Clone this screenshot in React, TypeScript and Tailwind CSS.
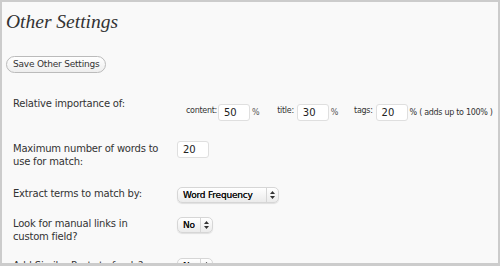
import React from 'react'

const ui = { fontFamily: '"DejaVu Sans", "Liberation Sans", sans-serif' }

function TextBox({ value, width = 'w-[32px]' }: { value: string; width?: string }) {
  return (
    <div
      className={`${width} h-[17px] shrink-0 bg-white border border-[#dfdfdf] rounded-[3px] pl-[5px] text-[10px] leading-[15px] tracking-normal text-[#222]`}
    >
      {value}
    </div>
  )
}

function Arrows() {
  return (
    <svg width="5" height="8" viewBox="0 0 5 8">
      <path d="M2.5 0 L5 3 L0 3 Z" fill="#333" />
      <path d="M0 5 L5 5 L2.5 8 Z" fill="#333" />
    </svg>
  )
}

function Select({ label, width }: { label: string; width: string }) {
  return (
    <div
      className={`${width} h-[16px] shrink-0 flex items-stretch rounded-[5px] border border-[#d6d6d6] bg-gradient-to-b from-white to-[#ebebeb] shadow-[0_1px_1px_rgba(0,0,0,0.1)]`}
    >
      <div className="flex-1 pl-[5px] text-[9px] leading-[14px] text-[#111] [text-shadow:0_0_0.4px_#111]">{label}</div>
      <div className="w-[12px] border-l border-[#d6d6d6] flex items-center justify-center">
        <Arrows />
      </div>
    </div>
  )
}

export default function App() {
  return (
    <div className="w-[500px] h-[266px] overflow-hidden bg-[#f9f9f9] border-t-2 border-l-2 border-r-2 border-b-[3px] border-[#cccccc]" style={ui}>
      {/* heading */}
      <h2
        className="pl-[4px] pt-[8px] text-[19.5px] leading-[24px] italic text-[#333]"
        style={{ fontFamily: '"Liberation Serif", serif' }}
      >
        Other Settings
      </h2>

      <div className="flex pl-[4px] mt-[22px]">
        <button className="h-[17px] px-[6px] rounded-full border border-[#bbbbbb] bg-gradient-to-b from-white to-[#eeeeee] text-[9px] leading-[15px] tracking-[-0.2px] text-[#333]">
          Save Other Settings
        </button>
      </div>

      <div className="pl-[11px] mt-[24px] text-[10px] leading-[13px] tracking-[-0.2px] text-[#333]">
        {/* relative importance */}
        <div className="flex h-[45px]">
          <div className="w-[164px] shrink-0">Relative importance of:</div>
          <div className="pl-[9px] pt-[7px] flex items-start whitespace-nowrap text-[8px] leading-[14px] tracking-[-0.3px]">
            <span className="mr-[1px]">content:</span>
            <TextBox value="50" />
            <span className="ml-[2px] mt-[2px] text-[#555]">%</span>
            <span className="ml-[18px] mr-[3px]">title:</span>
            <TextBox value="30" />
            <span className="ml-[2px] mt-[2px] text-[#555]">%</span>
            <span className="ml-[16px] mr-[3px]">tags:</span>
            <TextBox value="20" />
            <span className="ml-[2px] mt-[2px]">% ( adds up to 100% )</span>
          </div>
        </div>

        {/* max words */}
        <div className="flex h-[45px]">
          <div className="w-[164px] shrink-0">
            Maximum number of words to
            <br />
            use for match:
          </div>
          <div className="-mt-[1px]">
            <TextBox value="20" />
          </div>
        </div>

        {/* extract terms */}
        <div className="flex h-[30px]">
          <div className="w-[164px] shrink-0">Extract terms to match by:</div>
          <Select label="Word Frequency" width="w-[102px]" />
        </div>

        {/* manual links */}
        <div className="flex h-[42px]">
          <div className="w-[164px] shrink-0">
            Look for manual links in
            <br />
            custom field?
          </div>
          <Select label="No" width="w-[36px]" />
        </div>

        {/* feeds */}
        <div className="flex">
          <div className="w-[164px] shrink-0">Add Similar Posts to feeds?</div>
          <div className="-mt-[1px]">
            <Select label="No" width="w-[36px]" />
          </div>
        </div>
      </div>
    </div>
  )
}
